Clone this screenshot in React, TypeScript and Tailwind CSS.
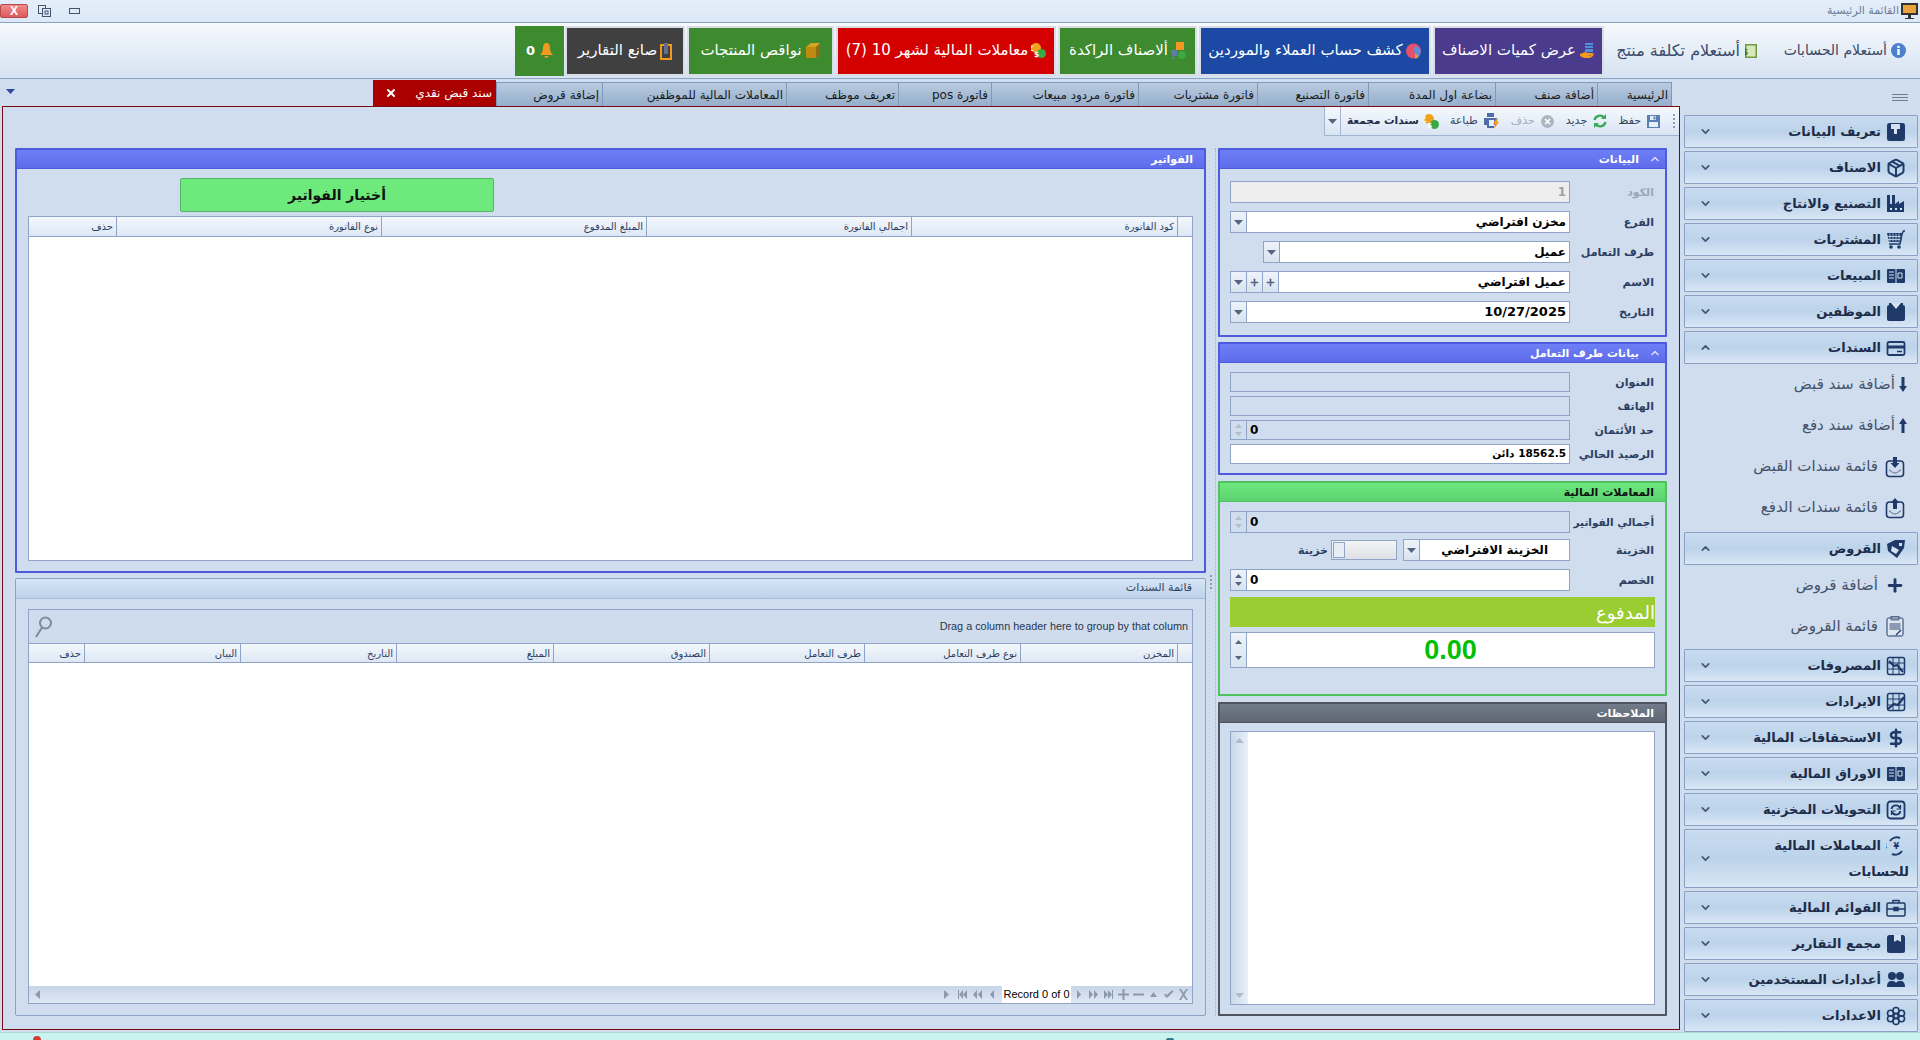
import { ReactNode } from "react";
import { ChevronDown, ChevronUp, DollarSign, Package, Plus, X } from "lucide-react";

const navy = "#1f3a68";

function Tri({ up = false, color = "#55657d", small = false }: { up?: boolean; color?: string; small?: boolean }) {
  return (
    <svg width={small ? 7 : 9} height={small ? 4 : 5} viewBox="0 0 9 5">
      <path d={up ? "M4.5 0 9 5H0z" : "M0 0h9L4.5 5z"} fill={color} />
    </svg>
  );
}

function TeeIcon() {
  return (
    <svg width="20" height="20" viewBox="0 0 20 20">
      <rect x="1" y="1" width="18" height="18" rx="2.5" fill={navy} />
      <path d="M5 2h9v5h-3v5H8V7H5z" fill="#d3e2f2" />
    </svg>
  );
}
function ReportIcon() {
  return (
    <svg width="20" height="20" viewBox="0 0 20 20">
      <rect x="1" y="1" width="18" height="18" rx="2.5" fill={navy} />
      <path d="M8 1h7v7l-3.500-2L8 8z" fill="#d3e2f2" />
    </svg>
  );
}
function ShirtIcon() {
  return (
    <svg width="20" height="20" viewBox="0 0 20 20">
      <rect x="1" y="3" width="18" height="16" rx="2" fill={navy} />
      <path d="M4 1h12l-6 7z" fill="#d3e2f2" />
      <path d="M3 1h2l5 6 5-6h2v2l-7 7-7-7z" fill={navy} />
    </svg>
  );
}
function FactoryIcon() {
  return (
    <svg width="20" height="20" viewBox="0 0 20 20">
      <path d="M1 18V1h3v9h2V1h3v9l4-3v3l5-3v11z" fill={navy} />
      <path d="M4 14h2v2H4zm5 0h2v2H9zm5 0h2v2h-2z" fill="#d3e2f2" />
    </svg>
  );
}
function CartIcon() {
  return (
    <svg width="20" height="20" viewBox="0 0 20 20">
      <path d="M1 3h15l-1 9H3z" fill={navy} />
      <path d="M4 3.500v8M7 3.500v8M10 3.500v8M13 3.500v8M1.500 6.500h14M2 9.500h13" stroke="#d3e2f2" strokeWidth=".8" />
      <path d="M16 4l1.500-3h1.500M3 14h11l2-10" stroke={navy} strokeWidth="1.500" fill="none" />
      <circle cx="5" cy="17" r="1.800" fill={navy} />
      <circle cx="13" cy="17" r="1.800" fill={navy} />
    </svg>
  );
}
function BookIcon() {
  return (
    <svg width="20" height="20" viewBox="0 0 20 20">
      <rect x="1" y="3" width="18" height="14" rx="1" fill={navy} />
      <path d="M3 6h5M3 9h5M3 12h5M12 7h4v5h-4z" stroke="#d3e2f2" strokeWidth="1" fill="none" />
      <path d="M10 3v14" stroke="#d3e2f2" strokeWidth="1" />
    </svg>
  );
}
function CardIcon() {
  return (
    <svg width="20" height="20" viewBox="0 0 20 20" fill="none">
      <rect x="1.500" y="4" width="17" height="13" rx="1.500" stroke={navy} strokeWidth="1.800" />
      <path d="M2 7.500h16v3H2z" fill={navy} />
      <path d="M11 13.500h5" stroke={navy} strokeWidth="1.500" />
    </svg>
  );
}
function TagIcon() {
  return (
    <svg width="20" height="20" viewBox="0 0 20 20">
      <path d="M1 5 9 1h10l-1 8-7 10L2 12z" fill={navy} />
      <path d="M6 7l7 4-3 4-5-3zM13 4h3v3h-3z" fill="#d3e2f2" />
    </svg>
  );
}
function ChartGrid({ rising }: { rising: boolean }) {
  return (
    <svg width="20" height="20" viewBox="0 0 20 20" fill="none" stroke={navy}>
      <rect x="1.500" y="1.500" width="17" height="17" rx="2" strokeWidth="1.500" />
      <path d="M7 2v16M13 2v16M2 7h16M2 13h16" strokeWidth="1" />
      <path d={rising ? "M2 17l6-5 4 1 6-8" : "M3 5l5 5 3-1 6 7"} strokeWidth="2.200" />
    </svg>
  );
}
function TransferIcon() {
  return (
    <svg width="20" height="20" viewBox="0 0 20 20" fill="none" stroke={navy}>
      <rect x="1.500" y="1.500" width="17" height="17" rx="3" strokeWidth="1.800" />
      <path d="M5.500 9A4.500 4.500 0 0 1 14 8M14.500 11A4.500 4.500 0 0 1 6 12" strokeWidth="1.800" />
      <path d="M14.500 5v4h-4M5.500 15v-4h4" strokeWidth="1.200" />
    </svg>
  );
}
function CycleIcon() {
  return (
    <svg width="20" height="20" viewBox="0 0 20 20" fill="none" stroke={navy} strokeWidth="2">
      <path d="M4 5a8 8 0 0 1 10-3M16 15a8 8 0 0 1-10 3" />
      <text x="1" y="13" fontSize="8" fontWeight="700" fill={navy} stroke="none">$</text>
      <text x="13" y="13" fontSize="8" fontWeight="700" fill={navy} stroke="none">¥</text>
    </svg>
  );
}
function CaseIcon() {
  return (
    <svg width="20" height="20" viewBox="0 0 20 20" fill="none" stroke={navy} strokeWidth="1.500">
      <rect x="1" y="5" width="18" height="13" rx="1.500" />
      <path d="M7 5V2.500h6V5M1 11h18" />
      <rect x="8" y="9.500" width="4" height="3" fill={navy} />
    </svg>
  );
}
function UsersIcon() {
  return (
    <svg width="20" height="20" viewBox="0 0 20 20" fill={navy}>
      <circle cx="6" cy="6" r="4" />
      <circle cx="14" cy="6" r="4" />
      <path d="M1 17c0-5 2-6 5-6 2 0 3 .500 4 2 1-1.500 2-2 4-2 3 0 5 1 5 6z" />
    </svg>
  );
}
function FlowerIcon() {
  return (
    <svg width="20" height="20" viewBox="0 0 20 20" fill="none" stroke={navy} strokeWidth="1.600">
      <circle cx="10" cy="4.500" r="3" />
      <circle cx="10" cy="15.500" r="3" />
      <circle cx="4.500" cy="7.200" r="3" />
      <circle cx="15.500" cy="7.200" r="3" />
      <circle cx="4.500" cy="12.800" r="3" />
      <circle cx="15.500" cy="12.800" r="3" />
      <circle cx="10" cy="10" r="2.200" />
    </svg>
  );
}
function TrayIcon({ up }: { up: boolean }) {
  return (
    <svg width="20" height="22" viewBox="0 0 20 22" fill="none">
      <rect x="1.500" y="5" width="17" height="15.500" rx="3" stroke={navy} strokeWidth="1.600" />
      <path d="M4 14c2 0 2 3 6 3s4-3 6-3" stroke="#7d8da8" strokeWidth="1.400" />
      <path d={up ? "M10 1l4.500 5H12v6H8V6H5.500z" : "M8 1h4v6h2.500L10 12 5.500 7H8z"} fill={navy} />
    </svg>
  );
}
function NoteIcon() {
  return (
    <svg width="18" height="21" viewBox="0 0 18 21">
      <rect x="1" y="2" width="16" height="18" rx="1.500" fill="#dfe6f0" stroke={navy} strokeWidth="1" />
      <rect x="5" y="0.500" width="8" height="3.500" fill="#8b9ab2" stroke={navy} strokeWidth=".6" />
      <path d="M3.500 7h11v7h-11z" fill="#8b9ab2" />
      <path d="M15 14l-5 5" stroke={navy} strokeWidth="1.200" />
    </svg>
  );
}
function ThinArrow({ up }: { up: boolean }) {
  return (
    <svg width="8" height="15" viewBox="0 0 8 15">
      <path d={up ? "M4 0l4 6H5.500v9h-3V6H0z" : "M2.500 0h3v9H8l-4 6-4-6h2.500z"} fill={navy} />
    </svg>
  );
}

type SideItem = {
  label: string;
  second?: string;
  icon: ReactNode;
  subsCls?: string;
  subs?: { label: string; icon: ReactNode; arrow?: boolean }[];
};

const sideItems: SideItem[] = [
  { label: "تعريف البيانات", icon: <TeeIcon /> },
  { label: "الاصناف", icon: <Package color={navy} strokeWidth={2.4} size={20} /> },
  { label: "التصنيع والانتاج", icon: <FactoryIcon /> },
  { label: "المشتريات", icon: <CartIcon /> },
  { label: "المبيعات", icon: <BookIcon /> },
  { label: "الموظفين", icon: <ShirtIcon /> },
  {
    label: "السندات",
    icon: <CardIcon />,
    subsCls: "mb-[4px]",
    subs: [
      { label: "أضافة سند قبض", icon: <ThinArrow up={false} />, arrow: true },
      { label: "أضافة سند دفع", icon: <ThinArrow up />, arrow: true },
      { label: "قائمة سندات القبض", icon: <TrayIcon up={false} /> },
      { label: "قائمة سندات الدفع", icon: <TrayIcon up /> },
    ],
  },
  {
    label: "القروض",
    icon: <TagIcon />,
    subsCls: "mb-[2px]",
    subs: [
      { label: "أضافة قروض", icon: <Plus color={navy} strokeWidth={3.500} size={21} /> },
      { label: "قائمة القروض", icon: <NoteIcon /> },
    ],
  },
  { label: "المصروفات", icon: <ChartGrid rising={false} /> },
  { label: "الايرادات", icon: <ChartGrid rising /> },
  { label: "الاستحقاقات المالية", icon: <DollarSign color={navy} strokeWidth={3} size={20} /> },
  { label: "الاوراق المالية", icon: <BookIcon /> },
  { label: "التحويلات المخزنية", icon: <TransferIcon /> },
  { label: "المعاملات المالية", second: "للحسابات", icon: <CycleIcon /> },
  { label: "القوائم المالية", icon: <CaseIcon /> },
  { label: "مجمع التقارير", icon: <ReportIcon /> },
  { label: "أعدادات المستخدمين", icon: <UsersIcon /> },
  { label: "الاعدادات", icon: <FlowerIcon /> },
];

function SideButton({ item }: { item: SideItem }) {
  return (
    <>
      <div
        className={`flex shrink-0 items-center justify-between rounded-[1px] border border-[#8a9fc4] bg-gradient-to-b from-[#c9dcf0] via-[#bcd3ea] to-[#d9e6f5] pr-[11px] pl-[14px] ${
          item.second ? "h-[59px]" : "h-[33px]"
        } ${item.subs ? "" : "mb-[3px]"}`}
      >
        <div className="flex flex-col">
          <div className="flex h-[26px] items-center gap-[5px]">
            {item.icon}
            <span className="text-[13px] font-bold text-[#1d2c48]">{item.label}</span>
          </div>
          {item.second && (
            <span className="mr-[-3px] h-[26px] text-[13px] leading-[26px] font-bold text-[#1d2c48]">{item.second}</span>
          )}
        </div>
        {item.subs ? (
          <ChevronUp size={13} strokeWidth={3} color="#45556e" />
        ) : (
          <ChevronDown size={13} strokeWidth={3} color="#45556e" />
        )}
      </div>
      {item.subs && (
        <div className={item.subsCls}>
          {item.subs.map((s) => (
            <div
              key={s.label}
              className={`flex h-[41px] items-center ${s.arrow ? "gap-[1px] pr-[8px]" : "gap-[7px] pr-[13px]"}`}
            >
              <span className={`flex justify-center ${s.arrow ? "w-[14px]" : "w-[20px]"}`}>{s.icon}</span>
              <span className="text-[15px] text-[#44526a]">{s.label}</span>
            </div>
          ))}
        </div>
      )}
    </>
  );
}

function Sidebar() {
  return (
    <aside className="flex w-[240px] shrink-0 flex-col overflow-hidden pr-[2px] pl-[4px]">
      <div className="flex h-[36px] shrink-0 flex-col items-start justify-center gap-[2px] pt-[1px] pr-[10px]">
        <div className="h-[1px] w-[16px] bg-[#6b7d98]" />
        <div className="h-[1px] w-[16px] bg-[#6b7d98]" />
        <div className="h-[1px] w-[16px] bg-[#6b7d98]" />
      </div>
      {sideItems.map((i) => (
        <SideButton key={i.label} item={i} />
      ))}
    </aside>
  );
}

function Coins() {
  return (
    <svg width="15" height="15" viewBox="0 0 15 15">
      <circle cx="5" cy="5" r="5" fill="#f0a21f" />
      <text x="2.500" y="8" fontSize="7.500" fontWeight="700" fill="#fff">€</text>
      <circle cx="10.500" cy="10.500" r="4.500" fill="#39a845" />
      <text x="8.200" y="13.500" fontSize="7.500" fontWeight="700" fill="#fff">$</text>
    </svg>
  );
}

const topButtons = [
  {
    label: "عرض كميات الاصناف",
    cls: "w-[171px] bg-[#4a3b8c]",
    icon: (
      <svg width="16" height="16" viewBox="0 0 16 16">
        <path d="M6 0h8v2H6zM6 3h8v2H6zM6 6h8v3H6z" fill="#4f8fd8" />
        <path d="M1 13v-2l5-2 3 1h5l-2 2H8l3 .500 4-2.500-1 3-3 2H5z" fill="#f29a1f" />
      </svg>
    ),
  },
  {
    label: "كشف حساب العملاء والموردين",
    cls: "w-[232px] bg-[#1b49a3]",
    icon: (
      <svg width="16" height="18" viewBox="0 0 16 18">
        <circle cx="7.500" cy="9" r="7.500" fill="#e8506a" />
        <path d="M9 3l6 5-2 7-3-1-2-5z" fill="#5b8fd8" />
        <path d="M9 12l3 1v3l-3 .500z" fill="#f29a1f" />
      </svg>
    ),
  },
  {
    label: "ألاصناف الراكدة",
    cls: "w-[139px] bg-[#3e8a2f]",
    icon: (
      <svg width="15" height="18" viewBox="0 0 15 18">
        <rect x="5" y="0" width="8" height="8" fill="#f29a1f" />
        <path d="M0 8h6v6H1z" fill="#5f7fa8" />
        <circle cx="11" cy="13" r="4" fill="#39a845" />
        <circle cx="2" cy="16" r="1.300" fill="#5f7fa8" />
      </svg>
    ),
  },
  { label: "معاملات المالية لشهر 10  (7)", cls: "w-[220px] bg-[#d40000]", icon: <Coins /> },
  {
    label: "نواقص المنتجات",
    cls: "w-[147px] bg-[#3e8a2f]",
    icon: (
      <svg width="16" height="17" viewBox="0 0 16 17">
        <path d="M1 5l5-4h9v11l-4 4H1z" fill="#d9a21f" />
        <path d="M1 5h10v11H1z" fill="#c08a10" />
        <path d="M11 5l4-4v11l-4 4z" fill="#8e6b10" />
      </svg>
    ),
  },
  {
    label: "صانع التقارير",
    cls: "w-[120px] bg-[#404040]",
    icon: (
      <svg width="12" height="18" viewBox="0 0 12 18">
        <path d="M1 3h10v14H1z" fill="none" stroke="#f29a1f" strokeWidth="2" />
        <rect x="4" y="1" width="4" height="11" fill="#5f6f8c" />
      </svg>
    ),
  },
];

function TopBar() {
  return (
    <div className="flex h-[57px] shrink-0 items-center border-y border-[#8aa3c4] bg-gradient-to-b from-[#f6f9fd] to-[#d5e2f2] pr-[14px]">
      <div className="flex w-[127px] items-center gap-[4px] text-[14px] whitespace-nowrap text-[#3a4a66]">
        <svg width="15" height="15" viewBox="0 0 15 15">
          <circle cx="7.500" cy="7.500" r="7.500" fill="#4a80cf" />
          <path d="M6.300 6h2.400v6H6.300zM6.300 2.800h2.400V5H6.300z" fill="#fff" />
        </svg>
        أستعلام الحسابات
      </div>
      <div className="mr-[22px] flex w-[146px] items-center gap-[5px] text-[16px] whitespace-nowrap text-[#3a4a66]">
        <svg width="12" height="14" viewBox="0 0 12 14">
          <rect width="12" height="14" fill="#6f9a3c" />
          <rect x="1.500" y="1.500" width="9" height="11" fill="#d7e8bd" />
          <text x="3.200" y="10.500" fontSize="8.500" fontWeight="700" fill="#2f7a22">$</text>
        </svg>
        أستعلام تكلفة منتج
      </div>
      <div className="mr-[7px] flex gap-[2px]">
        {topButtons.map((b) => (
          <div
            key={b.label}
            className={`flex h-[50px] items-center justify-center gap-[3px] border-2 border-[#d9dee6] text-[15px] whitespace-nowrap text-white ${b.cls}`}
          >
            {b.icon}
            {b.label}
          </div>
        ))}
        <div className="mr-[-1px] flex h-[50px] w-[49px] items-center justify-center gap-[5px] bg-[#3e8a2f] text-[13px] font-bold text-white">
          <svg width="13" height="15" viewBox="0 0 13 15">
            <path d="M6.500 0C9 0 10 2 10 5c0 3 1 5 3 7H0c2-2 3-4 3-7 0-3 1-5 3.500-5zM4.500 13h4a2 2 0 0 1-4 0z" fill="#f29a1f" />
          </svg>
          <span>0</span>
        </div>
      </div>
    </div>
  );
}

const tabs = [
  { label: "الرئيسية", w: "w-[75px]" },
  { label: "أضافة صنف", w: "w-[102px]" },
  { label: "بضاعة اول المدة", w: "w-[127px]" },
  { label: "فاتورة التصنيع", w: "w-[111px]" },
  { label: "فاتورة مشتريات", w: "w-[119px]" },
  { label: "فاتورة مردود مبيعات", w: "w-[147px]" },
  { label: "فاتورة pos", w: "w-[93px]" },
  { label: "تعريف موظف", w: "w-[112px]" },
  { label: "المعاملات المالية للموظفين", w: "w-[184px]" },
  { label: "إضافة قروض", w: "w-[106px]" },
];

function Tabs() {
  return (
    <div className="flex h-[27px] shrink-0 items-end pr-[8px]">
      {tabs.map((t) => (
        <div
          key={t.label}
          className={`flex h-[24px] items-center border-t border-l border-[#7f99bb] bg-gradient-to-b from-[#b9cbe0] to-[#95aecb] pr-[3px] text-[12px] text-[#1a1a1a] first:border-r ${t.w}`}
        >
          {t.label}
        </div>
      ))}
      <div className="flex h-[26px] w-[123px] items-center justify-between bg-[#ab0000] pr-[4px] pl-[12px] text-[12px] text-white">
        سند قبض نقدي
        <X size={12} strokeWidth={4} color="#fff" />
      </div>
      <div className="mr-auto mb-[12px] ml-[4px]">
        <Tri color="#2b4a9a" />
      </div>
    </div>
  );
}

function ActionBar() {
  return (
    <div className="flex h-[29px] w-[355px] shrink-0 items-center border-b border-l border-[#a4b6cf] bg-gradient-to-b from-[#f4f8fd] to-[#d9e5f3] pr-[4px] text-[11px] whitespace-nowrap text-[#33445f]">
      <div className="flex w-[4px] flex-col gap-[2px]">
        <div className="h-[2px] w-[2px] bg-[#8a9bb5]" />
        <div className="h-[2px] w-[2px] bg-[#8a9bb5]" />
        <div className="h-[2px] w-[2px] bg-[#8a9bb5]" />
        <div className="h-[2px] w-[2px] bg-[#8a9bb5]" />
      </div>
      <div className="mr-[11px] flex items-center gap-[6px]">
        <svg width="13" height="13" viewBox="0 0 13 13">
          <path d="M0 0h13v13H0z" fill="#5a7fb5" />
          <path d="M3 1h6v4H3zM2 7h9v5H2z" fill="#e8eff8" />
          <path d="M6.500 1.500h2v3h-2z" fill="#5a7fb5" />
        </svg>
        حفظ
      </div>
      <div className="mr-[11px] flex items-center gap-[6px]">
        <svg width="14" height="14" viewBox="0 0 14 14" fill="none" stroke="#38a957" strokeWidth="2.400">
          <path d="M1.500 6A5.500 5.500 0 0 1 11 3.500M12.500 8A5.500 5.500 0 0 1 3 10.500" />
          <path d="M13 0v5H8zM1 14V9h5z" fill="#38a957" stroke="none" />
        </svg>
        جديد
      </div>
      <div className="mr-[12px] flex items-center gap-[6px] text-[#a3adbb]">
        <svg width="13" height="13" viewBox="0 0 13 13">
          <circle cx="6.500" cy="6.500" r="6.500" fill="#aeb6c2" />
          <path d="M4 4l5 5M9 4l-5 5" stroke="#fff" strokeWidth="1.500" />
        </svg>
        حذف
      </div>
      <div className="mr-[12px] flex items-center gap-[5px]">
        <svg width="16" height="16" viewBox="0 0 16 16">
          <path d="M4 0h7v4H4zM1 5h13v7h-3v3H4v-3H1z" fill="#4d6ea8" />
          <path d="M6 7h5v6H6z" fill="#e8eff8" />
          <path d="M13 6l-3 5h2l-1 5 5-7h-2l1-3z" fill="#f29a1f" />
        </svg>
        طباعة
      </div>
      <div className="mr-[11px] flex items-center gap-[5px] text-[10.5px] font-bold text-[#1d2c48]">
        <Coins />
        سندات مجمعة
      </div>
      <div className="mr-auto flex h-full w-[16px] items-center justify-center border-r border-[#a4b6cf]">
        <Tri />
      </div>
    </div>
  );
}

const panelStyles = {
  blue: {
    box: "border-[#4e5bdc]",
    head: "from-[#6d7ff7] to-[#5f6cea] border-[#4e5bdc] text-white",
  },
  green: {
    box: "border-[#4fc25f]",
    head: "from-[#6ee87e] to-[#5bd270] border-[#4fc25f] text-[#111]",
  },
  gray: {
    box: "border-[#4f5560]",
    head: "from-[#727c8a] to-[#5f6773] border-[#4f5560] text-white",
  },
};

function Panel({
  title,
  kind,
  cls,
  arrow,
  children,
}: {
  title: string;
  kind: "blue" | "green" | "gray";
  cls: string;
  arrow?: boolean;
  children: ReactNode;
}) {
  const s = panelStyles[kind];
  return (
    <section className={`flex flex-col rounded-[1px] border-2 ${s.box} ${cls}`}>
      <div
        className={`flex h-[19px] shrink-0 items-center border-b bg-gradient-to-b text-[11px] leading-none font-bold ${s.head} ${
          arrow ? "gap-[10px] pr-[4px]" : "pr-[11px]"
        }`}
      >
        {arrow && <ChevronUp size={12} strokeWidth={3} color="#d8ddff" />}
        <span>{title}</span>
      </div>
      {children}
    </section>
  );
}

function Spin({ dim = false, tall = false }: { dim?: boolean; tall?: boolean }) {
  const c = dim ? "#b4bfce" : "#55657d";
  return (
    <div
      className={`flex w-[16px] shrink-0 flex-col items-center justify-center border-r border-[#8fa4c6] ${
        tall ? "gap-[12px]" : "gap-[4px]"
      } ${dim ? "" : "bg-gradient-to-b from-[#eef3fa] to-[#d8e3f1]"}`}
    >
      <Tri up color={c} small />
      <Tri color={c} small />
    </div>
  );
}

function Drop() {
  return (
    <div className="flex w-[16px] shrink-0 items-center justify-center border-r border-[#8fa4c6] bg-gradient-to-b from-[#eef3fa] to-[#d8e3f1]">
      <Tri />
    </div>
  );
}

function PlusBtn() {
  return (
    <div className="flex w-[16px] shrink-0 items-center justify-center border-r border-[#8fa4c6] bg-gradient-to-b from-[#eef3fa] to-[#d8e3f1]">
      <Plus size={11} strokeWidth={3.500} color="#55657d" />
    </div>
  );
}

function Row({
  label,
  dim,
  h = "h-[22px]",
  size = "text-[11px]",
  children,
}: {
  label: string;
  dim?: boolean;
  h?: string;
  size?: string;
  children: ReactNode;
}) {
  return (
    <div className={`flex items-center ${h}`}>
      <span
        className={`w-[84px] shrink-0 leading-none font-bold whitespace-nowrap ${size} ${
          dim ? "text-[#9aa6b8]" : "text-[#2b3f62]"
        }`}
      >
        {label}
      </span>
      {children}
    </div>
  );
}

function Box({ cls, children }: { cls: string; children?: ReactNode }) {
  return <div className={`flex h-full border border-[#8fa4c6] ${cls}`}>{children}</div>;
}

function Val({
  cls = "",
  size = "text-[12px]",
  color = "text-black",
  children,
}: {
  cls?: string;
  size?: string;
  color?: string;
  children?: ReactNode;
}) {
  return <div className={`flex min-w-0 flex-1 items-center pr-[3px] font-bold ${size} ${color} ${cls}`}>{children}</div>;
}

function NumBox({ dim }: { dim: boolean }) {
  return (
    <div dir="ltr" className="flex w-full">
      <Spin dim={dim} />
      <Val cls="pl-[3px]">0</Val>
    </div>
  );
}

function RightColumn() {
  return (
    <div className="flex w-[449px] shrink-0 flex-col gap-[5px]">
      <Panel title="البيانات" kind="blue" cls="h-[189px]" arrow>
        <div className="flex flex-col gap-[8px] pt-[12px] pr-[11px]">
          <Row label="الكود" dim>
            <Box cls="w-[340px] bg-[#eeeeee]">
              <Val color="text-[#a0a0a0]">1</Val>
            </Box>
          </Row>
          <Row label="الفرع">
            <Box cls="w-[340px] bg-white">
              <Val>مخزن افتراضي</Val>
              <Drop />
            </Box>
          </Row>
          <Row label="طرف التعامل">
            <Box cls="w-[307px] bg-white">
              <Val>عميل</Val>
              <Drop />
            </Box>
          </Row>
          <Row label="الاسم">
            <Box cls="w-[340px] bg-white">
              <Val>عميل افتراضي</Val>
              <PlusBtn />
              <PlusBtn />
              <Drop />
            </Box>
          </Row>
          <Row label="التاريخ">
            <Box cls="w-[340px] bg-white">
              <Val size="text-[13px]">10/27/2025</Val>
              <Drop />
            </Box>
          </Row>
        </div>
      </Panel>
      <Panel title="بيانات طرف التعامل" kind="blue" cls="h-[133px]" arrow>
        <div className="flex flex-col gap-[4px] pt-[9px] pr-[11px]">
          <Row label="العنوان" h="h-[20px]">
            <Box cls="w-[340px]" />
          </Row>
          <Row label="الهاتف" h="h-[20px]">
            <Box cls="w-[340px]" />
          </Row>
          <Row label="حد الأئتمان" h="h-[20px]">
            <Box cls="w-[340px]">
              <NumBox dim />
            </Box>
          </Row>
          <Row label="الرصيد الحالي" h="h-[20px]">
            <Box cls="w-[340px] bg-white">
              <Val size="text-[10.5px]">18562.5 دائن</Val>
            </Box>
          </Row>
        </div>
      </Panel>
      <Panel title="المعاملات المالية" kind="green" cls="mt-[1px] h-[215px]">
        <div className="flex flex-col pt-[9px] pr-[11px]">
          <Row label="أجمالي الفواتير" size="text-[10.5px]">
            <Box cls="w-[340px]">
              <NumBox dim />
            </Box>
          </Row>
          <div className="mt-[6px]">
            <Row label="الخزينة">
              <Box cls="w-[167px] bg-white">
                <Val cls="pr-[21px]">الخزينة الافتراضي</Val>
                <Drop />
              </Box>
              <div className="mr-[6px] flex h-[20px] w-[66px] justify-end border border-[#8fa4c6] bg-gradient-to-b from-[#f5f5f5] to-[#dcdfe4] p-[1px]">
                <div className="h-full w-[12px] border border-[#8fa4c6] bg-[#e6edf7]" />
              </div>
              <span className="mr-[3px] text-[11px] leading-none font-bold text-[#2b3f62]">خزينة</span>
            </Row>
          </div>
          <div className="mt-[8px]">
            <Row label="الخصم">
              <Box cls="w-[340px] bg-white">
                <NumBox dim={false} />
              </Box>
            </Row>
          </div>
          <div className="mt-[6px] mr-[-1px] flex h-[30px] w-[425px] items-center bg-[#9acd32] text-[18px] text-white">
            المدفوع
          </div>
          <div dir="ltr" className="mt-[5px] mr-[-1px] flex h-[36px] w-[425px] border border-[#8fa4c6] bg-white">
            <Spin tall />
            <div className="flex flex-1 items-center justify-center text-[27px] font-bold text-[#00c000] [font-family:'Liberation_Sans',sans-serif]">
              0.00
            </div>
          </div>
        </div>
      </Panel>
      <Panel title="الملاحظات" kind="gray" cls="mt-[1px] h-[314px]">
        <div className="pt-[8px] pr-[10px]">
          <div dir="ltr" className="flex h-[274px] w-[425px] border border-[#8fa4c6] bg-white">
            <div className="flex w-[17px] flex-col items-center justify-between bg-gradient-to-r from-[#c9d8ea] to-[#e9f0f8] py-[6px]">
              <Tri up color="#aebccd" />
              <Tri color="#aebccd" />
            </div>
          </div>
        </div>
      </Panel>
    </div>
  );
}

function GridHead({ cols, labels }: { cols: string; labels: string[] }) {
  return (
    <div className={`grid h-[20px] shrink-0 border-b border-[#8fa4c6] bg-gradient-to-b from-[#f4f8fd] to-[#dde7f4] ${cols}`}>
      <div className="border-l border-[#8fa4c6]" />
      {labels.map((l, i) => (
        <div
          key={l}
          className={`flex items-center pr-[3px] text-[10px] whitespace-nowrap text-[#2b3f62] ${
            i < labels.length - 1 ? "border-l border-[#8fa4c6]" : ""
          }`}
        >
          {l}
        </div>
      ))}
    </div>
  );
}

function NavGlyph({ d }: { d: string }) {
  return (
    <svg width="11" height="11" viewBox="0 0 11 11" className="shrink-0">
      <path d={d} fill="#8c99ad" />
    </svg>
  );
}

function Pager() {
  return (
    <div dir="ltr" className="flex h-[17px] shrink-0 items-center bg-gradient-to-b from-[#c6d5e8] to-[#dfe8f4] pl-[3px]">
      <NavGlyph d="M8 1v9L3 5.500z" />
      <div className="flex-1" />
      <NavGlyph d="M3 1v9l5-4.500z" />
      <div className="ml-[5px] flex items-center gap-[4px]">
        <NavGlyph d="M1 1h1v9H1zM6 1v9L2 5.500zM10 1v9L6 5.500z" />
        <NavGlyph d="M5 1v9L1 5.500zM10 1v9L6 5.500z" />
        <NavGlyph d="M7 1v9L3 5.500z" />
      </div>
      <div className="ml-[4px] flex h-full w-[69px] items-center justify-center bg-white text-[11px] whitespace-nowrap text-black [font-family:'Liberation_Sans',sans-serif]">
        Record 0 of 0
      </div>
      <div className="ml-[2px] flex items-center gap-[4px] pr-[3px]">
        <NavGlyph d="M4 1v9l4-4.500z" />
        <NavGlyph d="M1 1v9l4-4.500zM6 1v9l4-4.500z" />
        <NavGlyph d="M1 1v9l4-4.500zM5 1v9l4-4.500zM9 1h1v9H9z" />
        <NavGlyph d="M4.500 0h2v4.500H11v2H6.500V11h-2V6.500H0v-2h4.500z" />
        <NavGlyph d="M0 4.500h11v2H0z" />
        <NavGlyph d="M5.500 3 9 8H2z" />
        <NavGlyph d="M1 6l1.500-1.500L4 6l5-5 1.500 1.500L4 9z" />
        <NavGlyph d="M1 0h2l2.500 3.800L8 0h2L6.500 5.500 10 11H8L5.500 7.200 3 11H1l3.500-5.500z" />
      </div>
    </div>
  );
}

function LeftColumn() {
  return (
    <div className="flex w-[1191px] shrink-0 flex-col gap-[5px]">
      <Panel title="الفواتير" kind="blue" cls="h-[425px]">
        <div className="flex flex-1 flex-col px-[11px] pt-[9px] pb-[10px]">
          <div className="flex h-[34px] shrink-0 justify-start pr-[699px]">
            <div className="flex w-[314px] items-center justify-center rounded-[2px] border border-[#52b563] bg-[#6eea7d] text-[14px] font-bold text-[#111]">
              أختيار الفواتير
            </div>
          </div>
          <div className="mt-[4px] flex flex-1 flex-col border border-[#8fa4c6] bg-white">
            <GridHead
              cols="grid-cols-[15px_266px_265px_265px_265px_1fr]"
              labels={["كود الفاتورة", "اجمالي الفاتورة", "المبلغ المدفوع", "نوع الفاتورة", "حذف"]}
            />
          </div>
        </div>
      </Panel>
      <section className="flex h-[438px] flex-col rounded-[2px] border border-[#8aa3c4]">
        <div className="flex h-[20px] shrink-0 items-center border-b border-[#a8bcd6] bg-gradient-to-b from-[#d6e5f6] to-[#bdd2ea] pr-[13px] text-[11px] text-[#33445f]">
          قائمة السندات
        </div>
        <div className="flex flex-1 flex-col px-[12px] pt-[10px] pb-[11px]">
          <div className="flex flex-1 flex-col border border-[#8fa4c6] bg-white">
            <div className="flex h-[33px] shrink-0 items-center justify-between bg-[#cfdced] pr-[4px] pl-[4px]">
              <span dir="ltr" className="text-[10.85px] text-[#27364f] [font-family:'Liberation_Sans',sans-serif]">
                Drag a column header here to group by that column
              </span>
              <svg width="20" height="24" viewBox="0 0 20 24" fill="none" stroke="#7c8aa0" strokeWidth="2">
                <circle cx="12.500" cy="8" r="5.500" />
                <path d="M9 12.500 3 22" />
              </svg>
            </div>
            <GridHead
              cols="grid-cols-[15px_157px_156px_155px_156px_157px_156px_156px_1fr] border-t"
              labels={["المخزن", "نوع طرف التعامل", "طرف التعامل", "الصندوق", "المبلغ", "التاريخ", "البيان", "حذف"]}
            />
            <div className="flex-1" />
            <Pager />
          </div>
        </div>
      </section>
    </div>
  );
}

function Splitter() {
  return (
    <div className="flex h-[868px] w-[12px] shrink-0">
      <div className="w-[3px] border-l border-dotted border-[#9fb0c8]" />
      <div className="flex flex-1 flex-col items-center justify-center gap-[2px]">
        <div className="h-[2px] w-[2px] bg-[#8a9bb5]" />
        <div className="h-[2px] w-[2px] bg-[#8a9bb5]" />
        <div className="h-[2px] w-[2px] bg-[#8a9bb5]" />
        <div className="h-[2px] w-[2px] bg-[#8a9bb5]" />
      </div>
    </div>
  );
}

export default function App() {
  return (
    <div
      dir="rtl"
      className="flex h-[1040px] w-[1920px] flex-col overflow-hidden bg-[#d0ddee] [font-family:'DejaVu_Sans',sans-serif]"
    >
      <div className="flex h-[22px] shrink-0 items-center justify-between bg-gradient-to-b from-[#e4eefa] to-[#dce8f6]">
        <div className="flex items-center gap-[1px] text-[11px] text-[#6b7d98]">
          <svg width="19" height="18" viewBox="0 0 19 18" className="mr-[1px]">
            <rect x="1" y="1" width="17" height="12" fill="#333" />
            <rect x="3" y="3" width="13" height="8" fill="#e8a33a" />
            <path d="M8 13h3v3h3v1H5v-1h3z" fill="#333" />
          </svg>
          القائمة الرئيسية
        </div>
        <div dir="ltr" className="flex items-center">
          <div className="flex h-[14px] w-[28px] items-center justify-center rounded-[2px] border border-[#b84a4a] bg-gradient-to-b from-[#f08a8a] to-[#dd5a5a] text-[12px] font-bold text-white [font-family:'Liberation_Sans',sans-serif]">
            X
          </div>
          <svg width="13" height="12" viewBox="0 0 13 12" className="ml-[10px]" fill="none" stroke="#44546e">
            <rect x="0.500" y="0.500" width="7" height="8" />
            <rect x="4.500" y="3.500" width="8" height="8" fill="#dfeaf7" />
            <rect x="7" y="6" width="3" height="3" />
          </svg>
          <div className="ml-[18px] h-[6px] w-[11px] border border-[#44546e]" />
        </div>
      </div>
      <TopBar />
      <div className="flex min-h-0 flex-1">
        <Sidebar />
        <main className="flex w-[1678px] shrink-0 flex-col">
          <Tabs />
          <div className="flex h-[924px] shrink-0 flex-col border border-[#7a0a10]">
            <ActionBar />
            <div className="mt-[12px] flex flex-1 items-start pr-[12px]">
              <RightColumn />
              <Splitter />
              <LeftColumn />
            </div>
          </div>
        </main>
      </div>
      <div dir="ltr" className="flex h-[8px] shrink-0 items-end border-t border-[#a9d8d2] bg-[#c8f3ee] pl-[33px]">
        <div className="h-[4px] w-[8px] rounded-t-full bg-[#d33b3b]" />
        <div className="ml-[1125px] h-[2px] w-[8px] rounded-t-full bg-[#2f7c8a]" />
      </div>
    </div>
  );
}
